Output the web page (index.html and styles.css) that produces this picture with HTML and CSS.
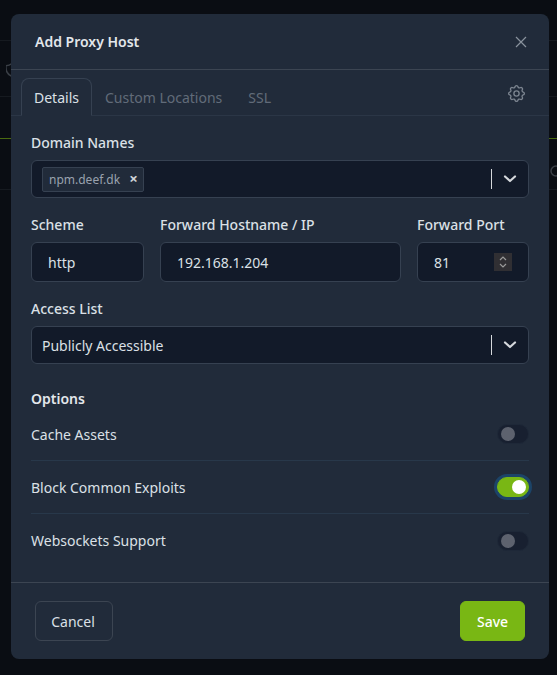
FILE: index.html
```html
<!DOCTYPE html>
<html lang="en">

<head>
    <meta charset="utf-8">
    <meta name="viewport" content="width=device-width, initial-scale=1.0">
    <title>Add Proxy Host</title>
    <link rel="stylesheet" href="styles.css">
</head>

<body>

    <!-- page behind the modal, only slivers of it show -->
    <div class="behind">
        <div class="line line_a"></div>
        <div class="line line_b"></div>
        <div class="line line_green"></div>
        <div class="line line_c"></div>
        <svg class="behind_shield" width="12" height="16" viewBox="0 0 12 16" fill="none" stroke="#3a3f46" stroke-width="1.5">
            <path d="M6 1.5c2 1.6 4 2.2 6 2.2c.5 4.800-1 8.800-6 10.800c-5-2-6.500-6-6-10.800c2 0 4-.6 6-2.200z" />
        </svg>
        <svg class="behind_search" width="16" height="16" viewBox="0 0 16 16" fill="none" stroke="#3a3f46" stroke-width="1.500">
            <circle cx="6" cy="6" r="5" />
            <path d="M10 10l5 5" />
        </svg>
    </div>

    <div class="modal">
        <header class="modal_head">
            <h1>Add Proxy Host</h1>
            <svg class="close" width="14" height="14" viewBox="0 0 14 14" fill="none" stroke="#8a929d" stroke-width="1.200">
                <path d="M2 2l10 10M12 2l-10 10" />
            </svg>
        </header>

        <nav class="tabs">
            <button class="tab valgt">Details</button>
            <button class="tab">Custom Locations</button>
            <button class="tab">SSL</button>
            <svg class="cog" width="21" height="21" viewBox="0 0 24 24" fill="none" stroke="#7c8590" stroke-width="1.500" stroke-linecap="round" stroke-linejoin="round">
                <path d="M10.325 4.317c.426 -1.756 2.924 -1.756 3.350 0a1.724 1.724 0 0 0 2.573 1.066c1.543 -.94 3.310 .826 2.370 2.370a1.724 1.724 0 0 0 1.065 2.572c1.756 .426 1.756 2.924 0 3.350a1.724 1.724 0 0 0 -1.066 2.573c.94 1.543 -.826 3.310 -2.370 2.370a1.724 1.724 0 0 0 -2.572 1.065c-.426 1.756 -2.924 1.756 -3.350 0a1.724 1.724 0 0 0 -2.573 -1.066c-1.543 .94 -3.310 -.826 -2.370 -2.370a1.724 1.724 0 0 0 -1.065 -2.572c-1.756 -.426 -1.756 -2.924 0 -3.350a1.724 1.724 0 0 0 1.066 -2.573c-.94 -1.543 .826 -3.310 2.370 -2.370c1 .608 2.296 .07 2.572 -1.065z" />
                <circle cx="12" cy="12" r="3" />
            </svg>
        </nav>

        <main class="body">
            <div class="field">
                <label>Domain Names</label>
                <div class="select select_tags">
                    <span class="tag">npm.deef.dk <b>×</b></span>
                    <span class="sep"></span>
                    <svg class="chevron" width="14" height="10" viewBox="0 0 14 10" fill="none" stroke="#d5d8dc" stroke-width="2.200" stroke-linecap="round" stroke-linejoin="round">
                        <path d="M2 2.500l5 4.500l5 -4.500" />
                    </svg>
                </div>
            </div>

            <div class="row3">
                <div class="field">
                    <label>Scheme</label>
                    <div class="input scheme"><span class="value">http</span></div>
                </div>
                <div class="field">
                    <label>Forward Hostname / IP</label>
                    <div class="input host"><span class="value">192.168.1.204</span></div>
                </div>
                <div class="field">
                    <label>Forward Port</label>
                    <div class="input port">
                        <span class="value">81</span>
                        <span class="spin">
                            <svg width="10" height="14" viewBox="0 0 10 14" fill="none" stroke="#9a9a9a" stroke-width="1.200">
                                <path d="M2 5l3 -3l3 3M2 9l3 3l3 -3" />
                            </svg>
                        </span>
                    </div>
                </div>
            </div>

            <div class="field">
                <label>Access List</label>
                <div class="select">
                    <span class="value select_value">Publicly Accessible</span>
                    <span class="sep"></span>
                    <svg class="chevron" width="14" height="10" viewBox="0 0 14 10" fill="none" stroke="#d5d8dc" stroke-width="2.200" stroke-linecap="round" stroke-linejoin="round">
                        <path d="M2 2.500l5 4.500l5 -4.500" />
                    </svg>
                </div>
            </div>

            <h2>Options</h2>
            <div class="option">
                <span>Cache Assets</span>
                <span class="toggle"></span>
            </div>
            <div class="option">
                <span>Block Common Exploits</span>
                <span class="toggle on"></span>
            </div>
            <div class="option">
                <span>Websockets Support</span>
                <span class="toggle"></span>
            </div>
        </main>

        <footer class="modal_foot">
            <button class="btn">Cancel</button>
            <button class="btn save">Save</button>
        </footer>
    </div>

</body>

</html>
```

FILE: styles.css
```css
* {
    box-sizing: border-box;
}

html,
body {
    height: 100%;
}

body {
    margin: 0;
    padding: 14px 8px 0 11px;
    background-color: #0a0d13;
    color: #dbe0e6;
    font-family: "Noto Sans", sans-serif;
    font-size: 14px;
    overflow: hidden;
}

.behind .line {
    position: absolute;
    left: 0;
    width: 100%;
    height: 1px;
    background-color: #161a20;
}

.line_a {
    top: 40px;
}

.line_b {
    top: 96px;
}

.behind .line_green {
    top: 138px;
    background-color: #4a6a10;
}

.line_c {
    top: 189px;
}

.behind_shield {
    position: absolute;
    left: 6px;
    top: 62px;
}

.behind_search {
    position: absolute;
    left: 550px;
    top: 165px;
}

.modal {
    position: relative;
    width: 538px;
    height: 645px;
    background-color: #212b3a;
    border-radius: 8px;
    display: flex;
    flex-direction: column;
}

.modal_head {
    height: 56px;
    padding: 0 21px 0 24px;
    border-bottom: 1px solid #3c4552;
    display: flex;
    align-items: center;
    justify-content: space-between;
}

h1 {
    margin: 0;
    font-size: 14px;
    font-weight: 600;
    color: #e3e7eb;
}

.tabs {
    height: 46px;
    padding: 8px 22px 0 10px;
    border-bottom: 1px solid #2b3646;
    display: flex;
    align-items: stretch;
}

.tab {
    padding: 0 12px;
    height: 38px;
    background: none;
    border: 1px solid transparent;
    border-radius: 8px 8px 0 0;
    color: #616b79;
    font: inherit;
}

.tab.valgt {
    border-color: #364151;
    border-bottom-color: #212b3a;
    color: #dbe0e6;
}

.cog {
    margin: 5px 0 0 auto;
}

.body {
    flex: 1;
    padding: 16px 20px 0;
}

.field {
    display: flex;
    flex-direction: column;
}

label {
    height: 21px;
    margin-bottom: 7px;
    line-height: 21px;
    font-weight: 500;
}

.select,
.input {
    background-color: #121a29;
    border: 1px solid #364151;
    border-radius: 6px;
    display: flex;
    align-items: center;
    line-height: 20px;
}

.value {
    padding-top: 2px;
}

.select {
    height: 38px;
    padding-right: 11px;
}

.select_value {
    padding-left: 10px;
    flex: 1;
}

.select_tags {
    padding-left: 10px;
}

.tag {
    height: 25px;
    padding: 0 5px 0 6px;
    margin-right: auto;
    background-color: #212b3a;
    border: 1px solid #364151;
    border-radius: 2px;
    color: #99a2ae;
    font-size: 12px;
    line-height: 23px;
}

.tag b {
    margin-left: 6px;
    font-size: 15px;
    line-height: 1;
    color: #cfd3d8;
}

.sep {
    width: 1px;
    height: 20px;
    margin-right: 11px;
    background-color: #d5d8dc;
}

.row3 {
    margin-top: 16px;
    display: grid;
    grid-template-columns: 113px 241px 112px;
    gap: 16px;
}

.input {
    height: 40px;
}

.scheme {
    padding-left: 16px;
}

.host {
    padding-left: 16px;
}

.port {
    padding: 0 16px;
    justify-content: space-between;
}

.spin {
    width: 18px;
    height: 18px;
    background-color: #302f33;
    display: flex;
    align-items: center;
    justify-content: center;
}

.row3 + .field {
    margin-top: 16px;
}

h2 {
    margin: 24px 0 0;
    height: 20px;
    line-height: 21px;
    font-size: 14px;
    font-weight: 600;
    color: #e3e7eb;
}

.option {
    height: 53px;
    display: flex;
    align-items: center;
    justify-content: space-between;
    border-bottom: 1px solid #28384a;
}

.option:last-child {
    border-bottom: 0;
}

.toggle {
    position: relative;
    width: 32px;
    height: 20px;
    background-color: #182030;
    border: 1px solid #1e2838;
    border-radius: 10px;
}

.toggle::after {
    content: "";
    position: absolute;
    left: 3px;
    top: 2px;
    width: 14px;
    height: 14px;
    border-radius: 50%;
    background-color: #5d626e;
}

.toggle.on {
    background-color: #79b714;
    border-color: #79b714;
    box-shadow: 0 0 0 3px #1c4468;
}

.toggle.on::after {
    left: 14px;
    background-color: #fff;
}

.modal_foot {
    height: 77px;
    padding: 18px 24px 0;
    border-top: 1px solid #3c4552;
    display: flex;
    justify-content: space-between;
    align-items: flex-start;
}

.btn {
    height: 40px;
    width: 78px;
    padding: 0 2px 0 0;
    background: none;
    border: 1px solid #3c4552;
    border-radius: 6px;
    color: #dbe0e6;
    font: inherit;
}

.btn.save {
    width: 65px;
    padding: 0;
    background-color: #79b714;
    border-color: #79b714;
    color: #fff;
    font-weight: 500;
}
```
